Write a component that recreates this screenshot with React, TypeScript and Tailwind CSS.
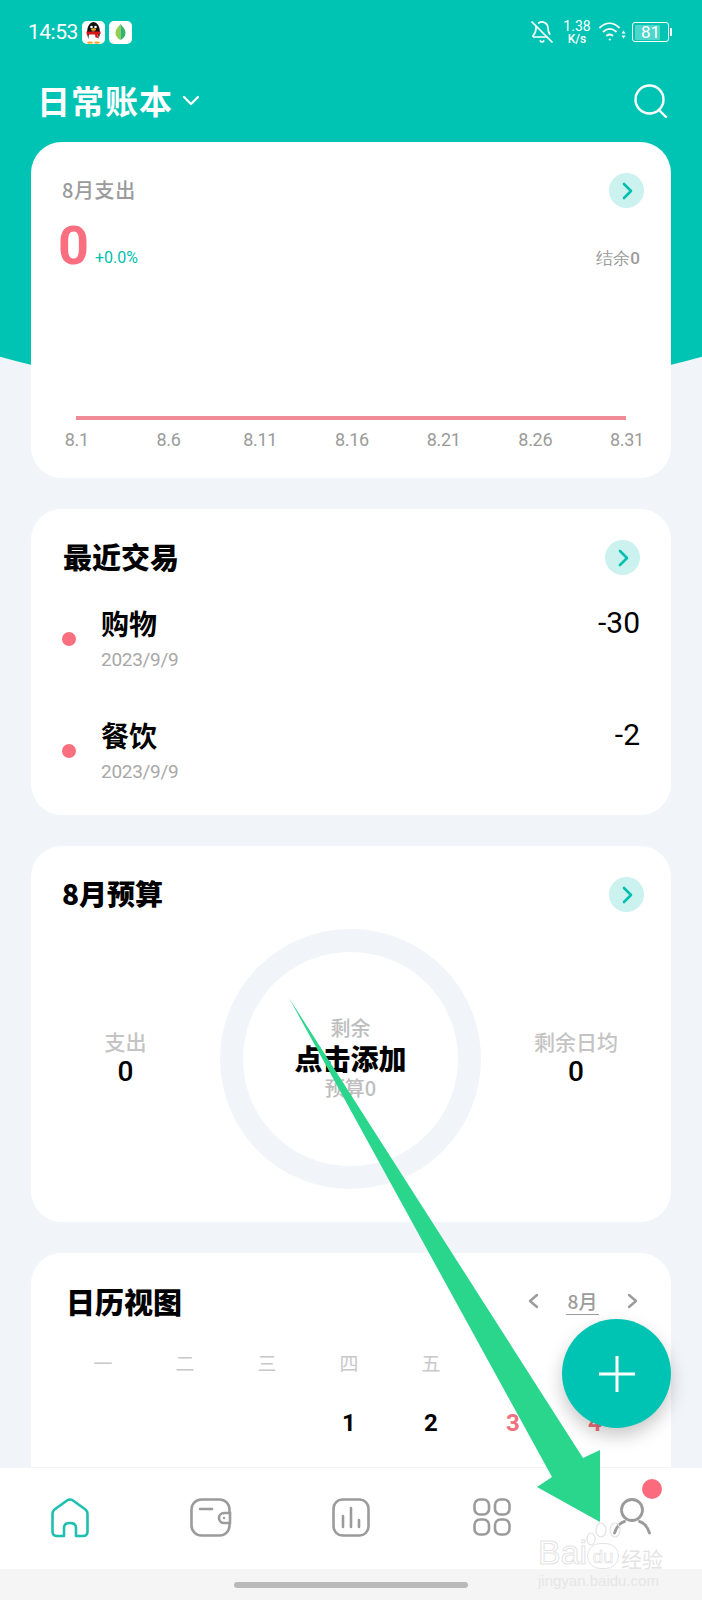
import { BellOff } from 'lucide-react';

const WEEKDAYS = ['一', '二', '三', '四', '五'];
const X_LABELS = ['8.1', '8.6', '8.11', '8.16', '8.21', '8.26', '8.31'];
const TRANSACTIONS = [
    { name: '购物', date: '2023/9/9', amount: '-30' },
    { name: '餐饮', date: '2023/9/9', amount: '-2' },
];

function ArrowButton() {
    return (
        <div className="w-[35px] h-[35px] rounded-full bg-[#CBF2EE] flex items-center justify-center">
            <svg width="12" height="18" viewBox="0 0 12 18" fill="none" stroke="#00BFAE" strokeWidth="2.6" strokeLinecap="round" strokeLinejoin="round">
                <path d="M3 2l7 7-7 7" />
            </svg>
        </div>
    );
}

function Penguin() {
    return (
        <div className="w-[23px] h-[23px] rounded-[5px] bg-white flex items-center justify-center">
            <svg width="21" height="23" viewBox="0 0 21 23">
                <ellipse cx="10.5" cy="11" rx="6.5" ry="10" fill="#111" />
                <ellipse cx="10.5" cy="16" rx="5" ry="5.5" fill="#fff" />
                <circle cx="8.5" cy="6" r="1.3" fill="#fff" />
                <circle cx="12.5" cy="6" r="1.3" fill="#fff" />
                <ellipse cx="10.5" cy="8.5" rx="2.6" ry="1.3" fill="#F5A623" />
                <path d="M3.5 10.5h14v2.5l-3 .6.6 3.4-2.6-.5-.5-2.9H3.5z" fill="#D7141A" />
                <ellipse cx="7" cy="21.6" rx="3" ry="1.2" fill="#F5A623" />
                <ellipse cx="14" cy="21.6" rx="3" ry="1.2" fill="#F5A623" />
            </svg>
        </div>
    );
}

function LeafApp() {
    return (
        <div className="w-[23px] h-[23px] rounded-[5px] bg-white flex items-center justify-center">
            <svg width="11" height="16" viewBox="0 0 11 16">
                <path d="M5.5 0C3 3 .5 5.5 .5 9c0 3 2 5.5 5 7z" fill="#8FD14F" />
                <path d="M5.5 0c2.5 3 5 5.5 5 9 0 3-2 5.5-5 7z" fill="#35B36B" />
            </svg>
        </div>
    );
}

function StatusBar() {
    return (
        <div className="h-[64px] pl-[28px] pr-[30px] flex items-center justify-between text-white font-['Roboto',sans-serif]">
            <div className="flex items-center">
                <span className="text-[21px] leading-none w-[54px] tracking-[-0.5px]">14:53</span>
                <Penguin />
                <div className="w-[4px]" />
                <LeafApp />
            </div>
            <div className="flex items-center">
                <BellOff size={24} strokeWidth={1.7} className="text-white" />
                <div className="w-[46px] flex flex-col items-center leading-none">
                    <span className="text-[14px] leading-[14px]">1.38</span>
                    <span className="text-[12px] leading-[13px] font-medium">K/s</span>
                </div>
                <svg width="27" height="22" viewBox="0 0 27 22" fill="none" stroke="#fff" strokeWidth="1.8" strokeLinecap="round" className="ml-[-1px]">
                    <path d="M1 6.5C7 1 14 1 20 6.5" />
                    <path d="M4.5 10.5c4-3.4 8.5-3.4 12.5 0" />
                    <path d="M8 14.5c2-1.5 3.5-1.5 5.5 0" />
                    <circle cx="10.8" cy="18.5" r="1.1" fill="#fff" stroke="none" />
                    <path d="M22.5 12.5h4l-2-3zM22.5 14.5h4l-2 3z" fill="#fff" stroke="none" />
                </svg>
                <div className="ml-[6px] w-[37px] h-[20px] rounded-[3px] border-[1.5px] border-white p-[1.5px] relative flex items-center">
                    <div className="h-full w-[81%] bg-white/30 rounded-[1px]" />
                    <span className="absolute inset-0 flex items-center justify-center text-[17px] leading-none">81</span>
                </div>
                <div className="w-[2px] h-[8px] bg-white rounded-r-[1px] ml-[1px]" />
            </div>
        </div>
    );
}

function Header() {
    return (
        <div className="h-[78px] pl-[37px] pr-[34px] pb-[5px] flex items-center justify-between text-white">
            <div className="flex items-center">
                <span className="text-[33px] leading-none tracking-[1px] font-bold">日常账本</span>
                <svg width="18" height="11" viewBox="0 0 18 11" fill="none" stroke="#fff" strokeWidth="2.2" strokeLinecap="round" strokeLinejoin="round" className="ml-[9px]">
                    <path d="M2 2l7 7 7-7" />
                </svg>
            </div>
            <svg width="34" height="34" viewBox="0 0 34 34" fill="none" stroke="#fff" strokeWidth="2.4" strokeLinecap="round" className="mb-[-1px]">
                <circle cx="15.5" cy="15.5" r="14" />
                <path d="M25 26l7 7" />
            </svg>
        </div>
    );
}

function ExpenseCard() {
    return (
        <div className="bg-white rounded-[31px] h-[336px] pt-[31px] flex flex-col">
            <div className="h-[35px] pl-[31px] pr-[27px] flex items-center justify-between">
                <span className="text-[20px] leading-none font-medium tracking-[0.6px] text-[#9b9b9b] mt-[-1px]">8月支出</span>
                <ArrowButton />
            </div>
            <div className="h-[56px] mt-[10px] pl-[27px] pr-[31px] flex items-end justify-between font-['Roboto',sans-serif]">
                <div className="flex items-end">
                    <span className="text-[54px] leading-[56px] font-bold text-[#F96F80]">0</span>
                    <span className="text-[16px] leading-[18px] mb-[7px] ml-[6px] text-[#00BFAE]">+0.0%</span>
                </div>
                <span className="text-[17px] leading-[18px] mb-[7px] font-medium text-[#9b9b9b]">结余0</span>
            </div>
            <div className="mt-[142px] mx-[45px] h-[4px] bg-[#EF8B97]" />
            <div className="mt-[9px] flex font-['Roboto',sans-serif] text-[18px] leading-[22px] text-[#9b9b9b] tracking-[-0.3px]">
                {X_LABELS.map((label) => (
                    <span key={label} className="w-[91.7px] shrink-0 text-center">{label}</span>
                ))}
            </div>
        </div>
    );
}

function RecentCard() {
    return (
        <div className="bg-white rounded-[31px] h-[306px] pt-[31px]">
            <div className="h-[35px] pl-[32px] pr-[31px] flex items-center justify-between">
                <span className="text-[29px] leading-none font-black text-black mt-[-3px]">最近交易</span>
                <ArrowButton />
            </div>
            <div className="mt-[29px] pl-[31px] pr-[31px]">
                {TRANSACTIONS.map((t) => (
                    <div key={t.name} className="h-[112px] flex items-start">
                        <div className="w-[14px] h-[14px] rounded-full bg-[#F96F80] mt-[28px] mr-[25px]" />
                        <div className="flex-1">
                            <div className="text-[28px] leading-[38px] font-bold text-black">{t.name}</div>
                            <div className="text-[19px] leading-[24px] mt-[6px] text-[#a8a8a8] tracking-[-0.3px] font-['Roboto',sans-serif]">{t.date}</div>
                        </div>
                        <div className="text-[30px] leading-[38px] text-black font-['Roboto',sans-serif]">{t.amount}</div>
                    </div>
                ))}
            </div>
        </div>
    );
}

function BudgetCard() {
    return (
        <div className="bg-white rounded-[31px] h-[376px] pt-[31px]">
            <div className="h-[35px] pl-[31px] pr-[27px] flex items-center justify-between">
                <span className="text-[28px] leading-none font-black text-black mt-[-3px]">8月预算</span>
                <ArrowButton />
            </div>
            <div className="mt-[17px] flex items-center">
                <div className="w-[189px] flex flex-col items-center">
                    <span className="text-[21px] leading-[24px] font-medium text-[#c4c4c4]">支出</span>
                    <span className="text-[28px] leading-[34px] mt-[2px] font-medium text-black font-['Roboto',sans-serif]">0</span>
                </div>
                <div className="w-[261px] h-[260px] rounded-full border-[23px] border-[#F1F4F9] flex flex-col items-center justify-center">
                    <span className="text-[20px] leading-[24px] mt-[-2px] font-medium text-[#bdbdbd]">剩余</span>
                    <span className="text-[28px] leading-[36px] font-black text-black">点击添加</span>
                    <span className="text-[20px] leading-[24px] font-medium text-[#bdbdbd]">预算0</span>
                </div>
                <div className="flex-1 flex flex-col items-center">
                    <span className="text-[21px] leading-[24px] font-medium text-[#c4c4c4]">剩余日均</span>
                    <span className="text-[28px] leading-[34px] mt-[2px] font-medium text-black font-['Roboto',sans-serif]">0</span>
                </div>
            </div>
        </div>
    );
}

function CalendarCard() {
    return (
        <div className="bg-white rounded-t-[31px] h-[300px] pt-[28px]">
            <div className="h-[40px] pl-[35px] pr-[32px] flex items-center justify-between">
                <span className="text-[29px] leading-none font-black text-black">日历视图</span>
                <div className="flex items-center">
                    <svg width="12" height="16" viewBox="0 0 12 16" fill="none" stroke="#9b9b9b" strokeWidth="2.4" strokeLinecap="round" strokeLinejoin="round">
                        <path d="M10 2L3 8l7 6" />
                    </svg>
                    <span className="ml-[27px] mr-[28px] w-[33px] text-center text-[19px] leading-[27px] font-medium text-[#9b9b9b] border-b border-[#9b9b9b]">8月</span>
                    <svg width="12" height="16" viewBox="0 0 12 16" fill="none" stroke="#9b9b9b" strokeWidth="2.4" strokeLinecap="round" strokeLinejoin="round">
                        <path d="M2 2l7 6-7 6" />
                    </svg>
                </div>
            </div>
            <div className="mt-[30px] pl-[31px] pr-[35px] grid grid-cols-7 text-center">
                {WEEKDAYS.map((d) => (
                    <span key={d} className="text-[19px] leading-[24px] text-[#c8c8c8]">{d}</span>
                ))}
            </div>
            <div className="mt-[34px] pl-[31px] pr-[35px] grid grid-cols-7 text-center font-['Roboto',sans-serif] text-[24px] leading-[28px] font-bold">
                <span />
                <span />
                <span />
                <span className="text-black">1</span>
                <span className="text-black">2</span>
                <span className="text-[#F0707F]">3</span>
                <span className="text-[#F0707F]">4</span>
            </div>
        </div>
    );
}

function BottomNav() {
    const grey = '#9b9b9b';
    return (
        <div className="h-[102px] bg-white border-t border-[#F4F5F6] relative">
            <div className="pl-[51px] pr-[51px] pt-[30px] flex items-start justify-between">
                <svg width="38" height="40" viewBox="0 0 38 40" fill="none" stroke="#1FBFB0" strokeWidth="2.6" strokeLinejoin="round">
                    <path d="M13 38H6q-4.5 0-4.5-4.5V16q0-3 2-4.5L16 2.5q3-2 6 0l12.5 9q2 1.5 2 4.5v17.5q0 4.5-4.5 4.5h-7V30q0-5-6-5t-6 5z" />
                </svg>
                <svg width="42" height="39" viewBox="0 0 42 39" fill="none" stroke={grey} strokeWidth="2.6" strokeLinecap="round" className="ml-[-2px]">
                    <rect x="1.5" y="1.5" width="38" height="36" rx="10" />
                    <path d="M10 11h12" />
                    <path d="M40 15h-6a4.5 4.5 0 0 0 0 10h6z" fill="#fff" />
                    <circle cx="34" cy="20" r="1.2" fill={grey} stroke="none" />
                </svg>
                <svg width="38" height="39" viewBox="0 0 38 39" fill="none" stroke={grey} strokeWidth="2.6" strokeLinecap="round" className="ml-[-2px]">
                    <rect x="1.5" y="1.5" width="35" height="36" rx="9" />
                    <path d="M11 18v11M19 10v19M27 22v7" />
                </svg>
                <svg width="38" height="38" viewBox="0 0 38 38" fill="none" stroke={grey} strokeWidth="2.6">
                    <rect x="1.5" y="1.5" width="14.5" height="15" rx="5.5" />
                    <rect x="22" y="1.5" width="14.5" height="15" rx="5.5" />
                    <rect x="1.5" y="21.5" width="14.5" height="15" rx="5.5" />
                    <rect x="22" y="21.5" width="14.5" height="15" rx="5.5" />
                </svg>
                <svg width="38" height="37" viewBox="0 0 38 37" fill="none" stroke={grey} strokeWidth="2.8" strokeLinecap="round">
                    <circle cx="19" cy="12" r="10.5" />
                    <path d="M1.5 35c2-7 7-11 10-11.5M36.5 35c-2-7-7-11-10-11.5" />
                </svg>
            </div>
            <div className="absolute left-[642px] top-[11px] w-[20px] h-[20px] rounded-full bg-[#FB6B7D]" />
        </div>
    );
}

function Watermark() {
    return (
        <div className="absolute left-[538px] top-[1522px] w-[130px] whitespace-nowrap text-white font-['Liberation_Sans',sans-serif] leading-none">
            <svg width="50" height="28" viewBox="0 0 50 28" fill="none" stroke="#e2e2e2" strokeWidth="1.2" className="absolute left-[40px] top-[0px]">
                <ellipse cx="23" cy="8" rx="5" ry="7" />
                <ellipse cx="37" cy="8" rx="5" ry="7" />
                <ellipse cx="13" cy="17" rx="4" ry="6" />
            </svg>
            <div className="flex items-end mt-[17px] h-[30px]">
                <span className="text-[34px] w-[49px] [-webkit-text-stroke:1px_#e4e4e4]">Bai</span>
                <span className="text-[19px] w-[32px] h-[26px] rounded-full border border-[#e4e4e4] flex items-center justify-center [-webkit-text-stroke:0.6px_#dcdcdc]">du</span>
                <span className="text-[21px] ml-[2px] font-normal font-['Noto_Sans_CJK_SC',sans-serif] text-[#e4e4e4]">经验</span>
            </div>
            <div className="text-[15px] mt-[4px] text-[#e6e6e6]">jingyan.baidu.com</div>
        </div>
    );
}

export default function App() {
    return (
        <div className="relative w-[702px] h-[1600px] overflow-hidden bg-[#F1F4F9] flex flex-col font-['Noto_Sans_CJK_SC',sans-serif]">
            {/* teal header background */}
            <div className="absolute left-[-149px] top-0 w-[1000px] h-[398px] bg-[#00C4B3] rounded-b-[500px_143px]" />

            <div className="relative flex-1 min-h-0 overflow-hidden">
                <StatusBar />
                <Header />
                <div className="mx-[31px] flex flex-col gap-[31px]">
                    <ExpenseCard />
                    <RecentCard />
                    <BudgetCard />
                    <CalendarCard />
                </div>
            </div>
            <BottomNav />
            <div className="relative h-[31px] bg-[#F5F5F5] flex justify-center pt-[13px]">
                <div className="w-[234px] h-[6px] rounded-full bg-[#B9B9B9]" />
            </div>

            {/* floating add button */}
            <div className="absolute left-[562px] top-[1319px] w-[109px] h-[109px] rounded-full bg-[#00C4B3] shadow-[0_8px_18px_rgba(0,0,0,0.22)] flex items-center justify-center">
                <svg width="36" height="36" viewBox="0 0 36 36" stroke="#fff" strokeWidth="3">
                    <path d="M18 0v36M0 18h36" />
                </svg>
            </div>

            {/* annotation arrow drawn over the screenshot */}
            <svg width="702" height="1600" viewBox="0 0 702 1600" className="absolute left-0 top-0 pointer-events-none">
                <polygon points="289,998 583,1458 600,1450 600,1522 537,1487 552,1477" fill="#2AD58C" />
            </svg>
            <Watermark />
        </div>
    );
}
